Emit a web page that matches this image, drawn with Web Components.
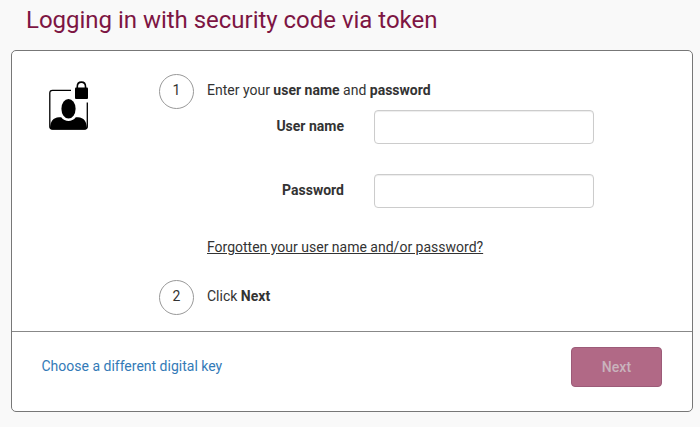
<!DOCTYPE html>
<html lang="en">
<head>
<meta charset="utf-8">
<title>Logging in with security code via token</title>
<style>
  body {
    margin: 0;
    background: #f9f9f9;
    color: #333;
    font-family: Roboto, sans-serif;
    font-size: 14px;
    line-height: 20px;
  }
</style>
</head>
<body>
<login-page>
  <span slot="title">Logging in with security code via token</span>
  <login-card>
    <user-lock-icon slot="icon"></user-lock-icon>
    <login-step number="1">
      Enter your <b>user name</b> and <b>password</b>
      <form-field slot="content" type="text">User name</form-field>
      <form-field slot="content" type="password">Password</form-field>
      <text-link slot="content" class="forgotten" underlined>Forgotten your user name and/or password?</text-link>
    </login-step>
    <login-step number="2">Click <b>Next</b></login-step>
    <text-link slot="footer">Choose a different digital key</text-link>
    <primary-button slot="footer">Next</primary-button>
  </login-card>
</login-page>

<script>
function define(name, html, setup) {
  const template = document.createElement("template");
  template.innerHTML = html;

  customElements.define(name, class extends HTMLElement {
    constructor() {
      super();
      this.attachShadow({ mode: "open" });
      this.shadowRoot.appendChild(template.content.cloneNode(true));
      if (setup) setup(this, this.shadowRoot);
    }
  });
}

define("login-page", `
  <style>
    :host {
      display: block;
      box-sizing: border-box;
      height: 427px;
      padding: 5px 7px 0 11px;
    }
    h1 {
      margin: 0 0 15px 15px;
      font-size: 24px;
      font-weight: 400;
      line-height: 30px;
      letter-spacing: -0.02px;
      color: #7d1543;
    }
  </style>
  <h1><slot name="title"></slot></h1>
  <slot></slot>
`);

define("login-card", `
  <style>
    :host {
      display: flex;
      flex-direction: column;
      box-sizing: border-box;
      height: 362px;
      border: 1px solid #777;
      border-radius: 5px;
      background: #fff;
    }
    .body {
      flex: 1;
      display: flex;
      gap: 71px;
      padding: 23px 0 0 37px;
    }
    .icon {
      width: 39px;
      padding-top: 7px;
    }
    .steps {
      flex: 1;
      display: flex;
      flex-direction: column;
    }
    footer {
      display: flex;
      align-items: center;
      justify-content: space-between;
      box-sizing: border-box;
      height: 80px;
      padding: 0 30px 9px 29.5px;
      border-top: 1px solid #888;
    }
    ::slotted(text-link) {
      padding-bottom: 2px;
    }
  </style>
  <div class="body">
    <div class="icon"><slot name="icon"></slot></div>
    <div class="steps"><slot></slot></div>
  </div>
  <footer><slot name="footer"></slot></footer>
`);

define("login-step", `
  <style>
    :host {
      display: grid;
      grid-template-columns: 35px 1fr;
      column-gap: 13px;
    }
    .number {
      display: flex;
      align-items: center;
      justify-content: center;
      box-sizing: border-box;
      width: 35px;
      height: 35px;
      padding-bottom: 3px;
      border: 1px solid #999;
      border-radius: 50%;
    }
    .text {
      padding-top: 6px;
    }
    .content {
      grid-column: 2;
      margin-top: 1px;
    }
    ::slotted(b) {
      font-weight: 700;
    }
    ::slotted(form-field) {
      margin-bottom: 30px;
    }
    ::slotted(.forgotten) {
      margin: -1px 0 23px;
    }
  </style>
  <div class="number"></div>
  <div class="text"><slot></slot></div>
  <div class="content"><slot name="content"></slot></div>
`, (host, root) => {
  root.querySelector(".number").textContent = host.getAttribute("number");
});

define("form-field", `
  <style>
    :host {
      display: block;
    }
    label {
      display: grid;
      grid-template-columns: 137px 220px;
      column-gap: 30px;
      align-items: center;
    }
    span {
      padding-bottom: 2px;
      font-weight: 700;
      text-align: right;
    }
    input {
      box-sizing: border-box;
      width: 220px;
      height: 34px;
      padding: 6px 12px;
      border: 1px solid #ccc;
      border-radius: 4px;
      box-shadow: inset 0 1px 1px rgba(0, 0, 0, 0.075);
      font: inherit;
    }
  </style>
  <label><span><slot></slot></span><input></label>
`, (host, root) => {
  root.querySelector("input").type = host.getAttribute("type");
});

define("text-link", `
  <style>
    :host {
      display: block;
      color: #337ab7;
    }
    :host([underlined]) {
      color: #333;
    }
    a {
      color: inherit;
      cursor: pointer;
    }
    :host([underlined]) a {
      text-decoration: underline;
    }
  </style>
  <a><slot></slot></a>
`);

define("primary-button", `
  <style>
    :host {
      display: block;
    }
    button {
      display: block;
      box-sizing: border-box;
      width: 91px;
      height: 40px;
      padding: 0;
      border: 1px solid #9c5b78;
      border-radius: 4px;
      background: #b16986;
      color: #c9b3bd;
      font: inherit;
      font-weight: 500;
      letter-spacing: 0.1px;
    }
  </style>
  <button disabled><slot></slot></button>
`);

define("user-lock-icon", `
  <style>
    :host,
    svg {
      display: block;
    }
  </style>
  <svg width="39" height="49" viewBox="0 0 39 49">
    <path d="M22 9.300H3.500Q.8 9.300 .8 12V45.500Q.8 48 3.500 48H35.500Q38.300 48 38.300 45.500V21.500" fill="none" stroke="#000" stroke-width="1.300"/>
    <path d="M1 47.500C1.500 40 4 36.800 10 36.300H12.200C16 41.300 23 41.300 26.800 36.300H29C35 36.800 37.500 40 38 47.500Q37.500 48.500 35.500 48.500H3.500Q1.500 48.500 1 47.500Z"/>
    <ellipse cx="19.500" cy="27.800" rx="7.100" ry="9.800"/>
    <path d="M28.300 7V5.500C28.300 -.3 36.500 -.3 36.500 5.500V7" fill="none" stroke="#000" stroke-width="1.600"/>
    <rect x="26" y="6.600" width="13" height="11.400" rx="1"/>
  </svg>
`);
</script>
</body>
</html>
